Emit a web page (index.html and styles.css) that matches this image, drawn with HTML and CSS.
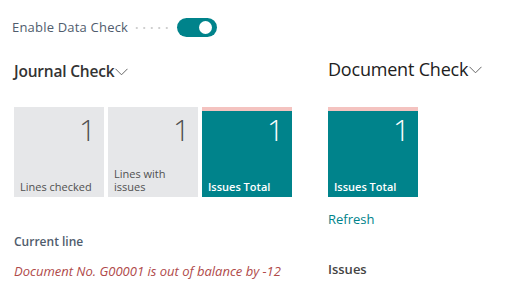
FILE: index.html
```html
<!DOCTYPE html>
<html>
<head>
<meta charset="utf-8">
<link rel="stylesheet" href="styles.css">
</head>
<body>
<div class="page">
  <div class="toggle-row">
    <span class="toggle-label">Enable Data Check</span>
    <span class="dots"></span>
    <span class="toggle"><span class="knob"></span></span>
  </div>
  <div class="columns">
    <div class="col-left">
      <div class="group-title">Journal Check<svg class="chev" width="13" height="8" viewBox="0 0 13 8"><path d="M0.5 0.8 L6.5 6.8 L12.5 0.8" fill="none" stroke="#666" stroke-width="1"/></svg></div>
      <div class="tiles">
        <div class="tile grey"><div class="num">1</div><div class="lbl">Lines checked</div></div>
        <div class="tile grey"><div class="num">1</div><div class="lbl">Lines with issues</div></div>
        <div class="tile teal flag"><div class="num">1</div><div class="lbl">Issues Total</div></div>
      </div>
      <div class="field-caption">Current line</div>
      <div class="error-text">Document No. G00001 is out of balance by -12</div>
    </div>
    <div class="col-right">
      <div class="group-title big">Document Check<svg class="chev" width="13" height="8" viewBox="0 0 13 8"><path d="M0.5 0.8 L6.5 6.8 L12.5 0.8" fill="none" stroke="#666" stroke-width="1"/></svg></div>
      <div class="tiles">
        <div class="tile teal flag"><div class="num">1</div><div class="lbl">Issues Total</div></div>
      </div>
      <div class="link">Refresh</div>
      <div class="issues">Issues</div>
    </div>
  </div>
</div>
</body>
</html>
```
FILE: styles.css
```css
html, body { margin: 0; padding: 0; background: #fff; }
body { font-family: "Open Sans", "Noto Sans", sans-serif; color: #212121; }
.page { padding: 0 0 0 12px; width: 494px; }
.toggle-row { display: flex; align-items: center; height: 20px; margin-top: 17px; }
.toggle-label { font-size: 13px; color: #505c6d; letter-spacing: 0.2px; }
.dots { width: 36px; height: 2px; margin: 2px 8px 0 5px; background-image: radial-gradient(circle, #cfcfcf 0.9px, transparent 1.1px); background-size: 7.5px 2px; background-repeat: repeat-x; }
.toggle { width: 40px; height: 19px; border-radius: 10px; background: #00838b; position: relative; display: inline-block; }
.knob { position: absolute; right: 5px; top: 3px; width: 13px; height: 13px; border-radius: 50%; background: #fff; }
.columns { display: flex; margin-top: 23px; }
.col-left { width: 314px; padding-left: 2px; }
.col-right { flex: 1; }
.group-title { font-size: 15.5px; font-weight: 600; color: #333; display: flex; align-items: center; height: 22px; letter-spacing: -0.2px; }
.group-title.big { font-size: 18px; font-weight: 400; color: #212121; margin-top: -4px; height: 26px; }
.chev { margin-left: 1px; margin-top: 2px; }
.tiles { display: flex; gap: 4px; margin-top: 25px; }
.col-right .tiles { margin-top: 25px; }
.tile { width: 90px; height: 90px; box-sizing: border-box; display: flex; flex-direction: column; justify-content: space-between; padding: 6px 8px 4px 6px; position: relative; }
.tile.grey { background: #e6e7e9; color: #505050; }
.tile.teal { background: #00838b; color: #fff; }
.tile.flag { border-top: 4px solid #f4c3c0; padding-top: 2px; }
.num { text-align: right; font-size: 30px; font-weight: 300; line-height: 34px; }
.lbl { font-size: 11px; line-height: 13px; }
.tile.teal .lbl { font-weight: 600; }
.field-caption { margin-top: 36px; font-size: 12px; font-weight: 600; color: #505c6d; }
.error-text { margin-top: 12px; font-size: 13px; font-style: italic; color: #b04a4a; }
.link { margin-top: 13px; font-size: 13px; color: #00838b; }
.issues { margin-top: 32px; font-size: 13px; font-weight: 600; color: #444; }
```
